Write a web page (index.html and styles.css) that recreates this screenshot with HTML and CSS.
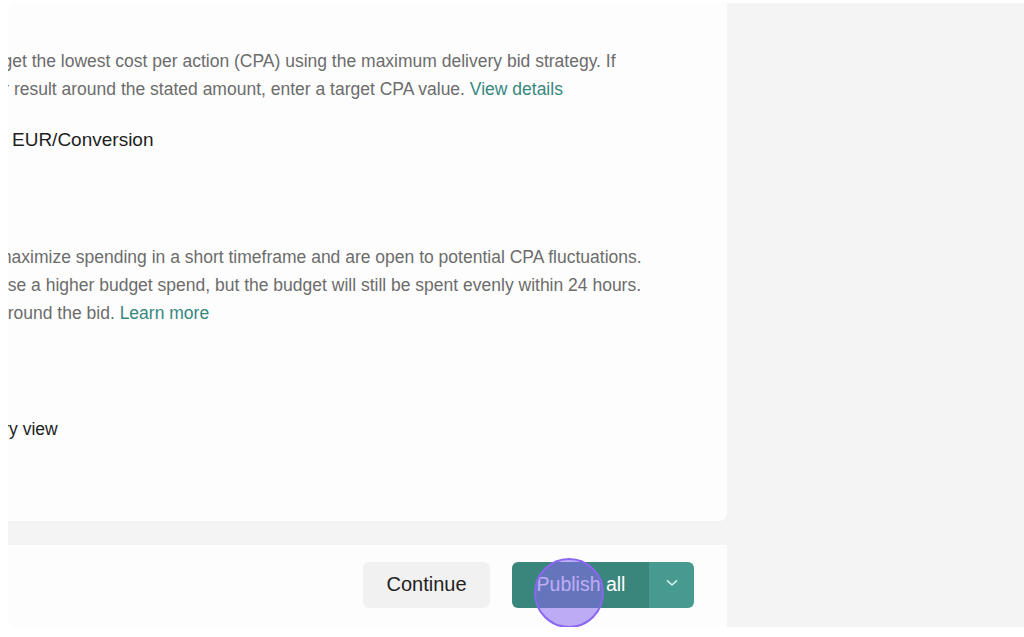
FILE: index.html
```html
<!DOCTYPE html>
<html lang="en">
<head>
<meta charset="utf-8">
<title>Bid strategy</title>
<link rel="stylesheet" href="styles.css">
</head>
<body>
<div class="frame">
  <div class="main-col">
    <section class="card">
      <div class="block block-cpa">
        <p class="line l1">to get the lowest cost per action (CPA) using the maximum delivery bid strategy. If</p>
        <p class="line l2">your result around the stated amount, enter a target CPA value. <a class="link" href="#">View details</a></p>
      </div>
      <div class="value">EUR/Conversion</div>
      <div class="block block-spend">
        <p class="line l3">maximize spending in a short timeframe and are open to potential CPA fluctuations.</p>
        <p class="line l4">use a higher budget spend, but the budget will still be spent evenly within 24 hours.</p>
        <p class="line l5">around the bid. <a class="link" href="#">Learn more</a></p>
      </div>
      <div class="summary">Summary view</div>
    </section>
    <footer class="footer">
      <button class="btn btn-secondary" type="button">Continue</button>
      <div class="split">
        <button class="btn btn-primary" type="button">Publish all</button>
        <button class="btn btn-caret" type="button" aria-label="More options">
          <svg width="12" height="8" viewBox="0 0 12 8" fill="none"><path d="M1.5 1.8 L6 6 L10.5 1.8" stroke="#d9efec" stroke-width="1.6" stroke-linecap="round" stroke-linejoin="round"/></svg>
        </button>
        <span class="click-dot"></span>
      </div>
    </footer>
  </div>
  <aside class="side"></aside>
</div>
</body>
</html>
```
FILE: styles.css
```css
* { box-sizing: border-box; }
html, body { margin: 0; padding: 0; background: #ffffff; }
body {
  font-family: "Liberation Sans", Arial, sans-serif;
  width: 1024px;
  height: 637px;
  overflow: hidden;
}
.frame {
  margin: 3px 0 0 8px;
  height: 624px;
  background: #f4f4f4;
  border-radius: 10px 0 0 10px;
  overflow: hidden;
  display: flex;
}
.main-col {
  width: 719px;
  display: flex;
  flex-direction: column;
  gap: 24px;
}
.card {
  height: 518px;
  background: #fdfdfd;
  border-radius: 0 0 8px 0;
  overflow: hidden;
  padding-top: 44px;
}
.block { margin: 0; }
.line {
  margin: 0;
  font-size: 17.5px;
  line-height: 28px;
  color: #6c6c6c;
  white-space: nowrap;
}
.link { color: #36887f; text-decoration: none; }
.l1 { margin-left: -25px; }
.l2 { margin-left: -33px; }
.l3 { margin-left: -11px; }
.l4 { margin-left: -10px; }
.l5 { margin-left: -10px; }
.value {
  margin: 23px 0 0 4px;
  font-size: 19px;
  line-height: 28px;
  color: #1e1e1e;
}
.block-spend { margin-top: 89px; }
.summary {
  margin: 88px 0 0 -65px;
  font-size: 17.5px;
  line-height: 28px;
  color: #1e1e1e;
  white-space: nowrap;
}
.footer {
  height: 82px;
  background: #fdfdfd;
  display: flex;
  align-items: center;
  justify-content: flex-end;
  padding: 0 33px 2px 0;
  gap: 22px;
}
.btn {
  font-family: inherit;
  border: 0;
  height: 46px;
  font-size: 20px;
  padding: 0 0 2px;
  cursor: pointer;
}
.btn-secondary {
  width: 127px;
  background: #f1f1f1;
  color: #222222;
  border-radius: 6px;
}
.split {
  position: relative;
  display: flex;
}
.btn-primary {
  width: 137px;
  background: #3b867c;
  color: #ffffff;
  border-radius: 6px 0 0 6px;
  font-size: 19.5px;
  padding-left: 1px;
}
.btn-caret {
  width: 45px;
  background: #479a90;
  border-radius: 0 6px 6px 0;
  display: flex;
  align-items: center;
  justify-content: center;
  padding-bottom: 5px;
}
.click-dot {
  position: absolute;
  left: 22px;
  top: -4px;
  width: 70px;
  height: 70px;
  border-radius: 50%;
  background: rgba(136, 104, 240, 0.55);
  border: 2px solid #8a66f2;
  pointer-events: none;
}
.side { flex: 1; background: #f4f4f4; }
```
